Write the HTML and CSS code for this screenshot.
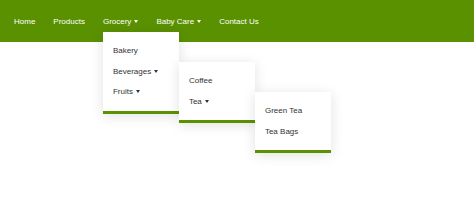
FILE: index.html
```html
<!DOCTYPE html>
<html lang="en">
<head>
    <meta charset="UTF-8">
    <title>Menu</title>
    <link rel="stylesheet" href="styles.css">
</head>
<body>
    <nav class="nav">
        <ul class="menu">
            <li><a href="#">Home</a></li>
            <li><a href="#">Products</a></li>
            <li>
                <a href="#">Grocery<span class="caret"></span></a>
                <ul class="drop">
                    <li><a href="#">Bakery</a></li>
                    <li>
                        <a href="#">Beverages<span class="caret"></span></a>
                        <ul class="drop side">
                            <li><a href="#">Coffee</a></li>
                            <li>
                                <a href="#">Tea<span class="caret"></span></a>
                                <ul class="drop side">
                                    <li><a href="#">Green Tea</a></li>
                                    <li><a href="#">Tea Bags</a></li>
                                </ul>
                            </li>
                        </ul>
                    </li>
                    <li><a href="#">Fruits<span class="caret"></span></a></li>
                </ul>
            </li>
            <li><a href="#">Baby Care<span class="caret"></span></a></li>
            <li><a href="#">Contact Us</a></li>
        </ul>
    </nav>
</body>
</html>
```

FILE: styles.css
```css
html, body{
    height: 100%;
}
body{
    margin: 0;
    font-family: "Liberation Sans", Arial, sans-serif;
    font-size: 8px;
    background: #fff;
}
ul{
    list-style: none;
    margin: 0;
    padding: 0;
}
a{
    text-decoration: none;
    color: inherit;
}
.nav{
    position: relative;
    background-color: #5a9100;
    height: 42px;
    color: #fff;
    z-index: 2;
}
.menu{
    display: flex;
    padding-left: 5px;
}
.menu>li{
    position: relative;
    margin: 0 9px;
    padding-top: 1px;
    line-height: 42px;
}
.caret{
    display: inline-block;
    margin-left: 3px;
    width: 0;
    height: 0;
    border-top: 3px solid currentColor;
    border-left: 2px solid transparent;
    border-right: 2px solid transparent;
    vertical-align: middle;
}
.drop{
    position: absolute;
    top: 32px;
    left: 0;
    width: 76px;
    padding: 9px 0 8px;
    background: #fff;
    color: #333;
    border-bottom: 3px solid #5a9100;
    box-shadow: 0 2px 12px rgba(0, 0, 0, 0.12);
    z-index: 1;
}
.drop li{
    position: relative;
    padding: 0 10px;
    line-height: 20.5px;
}
.drop .side{
    top: 0.5px;
    left: 100%;
}
```
